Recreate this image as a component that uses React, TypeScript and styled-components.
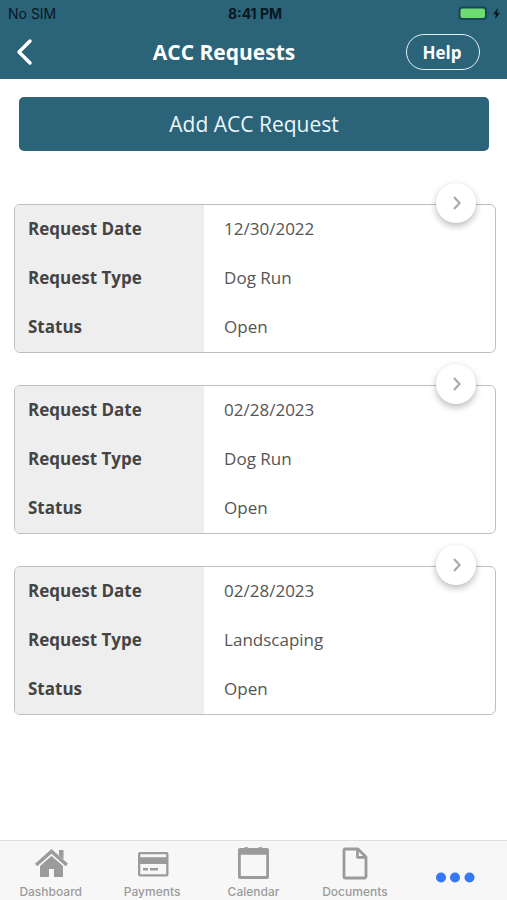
import React from "react";
import styled, { createGlobalStyle } from "styled-components";

const teal = "#2b6379";

const GlobalStyle = createGlobalStyle`
  *, *::before, *::after { box-sizing: border-box; }
  body {
    margin: 0;
    background: #fff;
    font-family: "Open Sans", "Noto Sans", sans-serif;
    color: #444;
  }
  button { font: inherit; cursor: pointer; }
`;

const Screen = styled.div`
  display: flex;
  flex-direction: column;
  min-height: 100vh;
`;

const Header = styled.header`
  background: ${teal};
  color: #fff;
  padding-bottom: 9px;
`;

const StatusBar = styled.div`
  display: grid;
  grid-template-columns: 1fr auto 1fr;
  align-items: center;
  height: 28px;
  padding: 0 5px 0 8px;
  color: #08171e;
  font-family: Inter, sans-serif;
  font-size: 14px;
  line-height: 20px;
`;

const Clock = styled.span`
  font-weight: 700;
`;

const Battery = styled.svg`
  justify-self: end;
  display: block;
`;

const NavBar = styled.nav`
  display: grid;
  grid-template-columns: 74px 1fr 74px;
  align-items: center;
  height: 42px;
  padding: 6px 27px 0 14px;
`;

const BackButton = styled.button`
  justify-self: start;
  display: flex;
  padding: 0;
  border: 0;
  background: none;
  color: #fff;
`;

const Title = styled.h1`
  margin: 0;
  padding-right: 46px;
  font-size: 21px;
  line-height: 28px;
  font-weight: 700;
  text-align: center;
  white-space: nowrap;
`;

const HelpButton = styled.button`
  justify-self: end;
  width: 74px;
  height: 36px;
  padding: 0 2px 0 0;
  border: 1px solid #e3f1f6;
  border-radius: 18px;
  background: none;
  color: #fff;
  font-size: 17px;
  font-weight: 700;
`;

const Content = styled.main`
  flex: 1;
  padding: 18px 11px 32px 14px;
`;

const AddButton = styled.button`
  display: block;
  width: calc(100% - 12px);
  height: 54px;
  margin: 0 0 53px 5px;
  padding: 0;
  border: 0;
  border-radius: 5px;
  background: ${teal};
  color: #eaf7fb;
  font-size: 21px;
`;

const RequestList = styled.ul`
  display: flex;
  flex-direction: column;
  gap: 32px;
  margin: 0;
  padding: 0;
  list-style: none;
`;

const Card = styled.li`
  position: relative;
  border: 1px solid #bfbfbf;
  border-radius: 6px;
`;

const Fields = styled.dl`
  margin: 0;
  border-radius: 5px;
  overflow: hidden;
`;

const Field = styled.div`
  display: grid;
  grid-template-columns: 13fr 20fr;
  font-size: 17px;
  line-height: 47px;
`;

const Label = styled.dt`
  padding: 0 0 2px 13px;
  background: #eee;
  font-weight: 700;
`;

const Value = styled.dd`
  margin: 0;
  padding: 0 0 2px 20px;
  color: #555;
`;

const OpenButton = styled.button`
  position: absolute;
  top: -22px;
  right: 19px;
  display: flex;
  align-items: center;
  justify-content: center;
  width: 40px;
  height: 40px;
  padding: 0;
  border: 0;
  border-radius: 50%;
  background: #fff;
  color: #aaa;
  box-shadow: 0 3px 7px rgba(0, 0, 0, 0.28);
`;

const TabBar = styled.nav`
  position: sticky;
  bottom: 0;
  display: grid;
  grid-template-columns: repeat(5, 1fr);
  height: 60px;
  border-top: 1px solid #dedede;
  background: #f7f7f7;
`;

const Tab = styled.a`
  display: flex;
  flex-direction: column;
  align-items: center;
  padding-top: 5px;
  color: #9b9b9b;
  font-family: Inter, sans-serif;
  font-size: 12px;
  line-height: 16px;
  font-weight: 500;
  text-decoration: none;
`;

const MoreTab = styled(Tab)`
  padding-top: 19px;
  color: #3478f6;
`;

const TabIcon = styled.svg`
  display: block;
  margin-bottom: 4px;
`;

const requests = [
  { id: 1, date: "12/30/2022", type: "Dog Run", status: "Open" },
  { id: 2, date: "02/28/2023", type: "Dog Run", status: "Open" },
  { id: 3, date: "02/28/2023", type: "Landscaping", status: "Open" },
];

const tabs = [
  {
    name: "Dashboard",
    icon: (
      <g fill="currentColor">
        <path d="M17.500 3 34 17.800l-2.200 2.500L17.500 7.800 3.200 20.300 1 17.800Z" />
        <path d="M25 4h4.500v9.500L25 9.500Z" />
        <path d="M17.500 10 29 20v11h-9v-8h-5v8H6V20Z" />
      </g>
    ),
  },
  {
    name: "Payments",
    icon: (
      <g fill="currentColor">
        <path
          fillRule="evenodd"
          d="M5 6h26.500a2 2 0 0 1 2 2v20.500a2 2 0 0 1-2 2H5a2 2 0 0 1-2-2V8A2 2 0 0 1 5 6Zm.300 2.200v3h25.900v-3Zm0 9.800v10.200h25.900V18Z"
        />
        <path d="M8 22h5v2.600H8ZM15 22h8v2.600h-8Z" />
      </g>
    ),
  },
  {
    name: "Calendar",
    icon: (
      <path
        fill="currentColor"
        fillRule="evenodd"
        d="M4 2h4q.5-1 2.300-1t2.300 1h9.400q.5-1 2.300-1t2.300 1H31a2 2 0 0 1 2 2v27a2 2 0 0 1-2 2H4a2 2 0 0 1-2-2V4a2 2 0 0 1 2-2Zm.800 6.800V30h25.400V8.800Z"
      />
    ),
  },
  {
    name: "Documents",
    icon: (
      <g fill="none" stroke="currentColor" strokeWidth="2.800" strokeLinejoin="round">
        <path d="M7.500 3H20l8 8v19.500a1.500 1.500 0 0 1-1.500 1.500h-19A1.500 1.500 0 0 1 6 30.500v-26A1.500 1.500 0 0 1 7.500 3Z" />
        <path d="M19.500 3.500v7.800H28" />
      </g>
    ),
  },
];

export default function App() {
  return (
    <Screen>
      <GlobalStyle />
      <Header>
        <StatusBar>
          <span>No SIM</span>
          <Clock>8:41 PM</Clock>
          <Battery width="44" height="16" viewBox="0 0 44 16" aria-hidden="true">
            <rect x="1.500" y="1.500" width="26.500" height="11.500" rx="3" fill="#6fdc72" stroke="#184759" strokeWidth="2" />
            <path d="M30.500 5.500q1.500 1.800 0 3.500Z" fill="#184759" />
            <path d="M40 2 35 8.200h3l-1 5 5-6.500h-3Z" fill="#08171e" />
          </Battery>
        </StatusBar>
        <NavBar>
          <BackButton type="button" aria-label="Back">
            <svg width="20" height="28" viewBox="0 0 20 28">
              <path d="M16 3 5 14l11 11" fill="none" stroke="currentColor" strokeWidth="3.500" strokeLinecap="round" strokeLinejoin="round" />
            </svg>
          </BackButton>
          <Title>ACC Requests</Title>
          <HelpButton type="button">Help</HelpButton>
        </NavBar>
      </Header>

      <Content>
        <AddButton type="button">Add ACC Request</AddButton>
        <RequestList>
          {requests.map((request) => (
            <Card key={request.id}>
              <Fields>
                <Field>
                  <Label>Request Date</Label>
                  <Value>{request.date}</Value>
                </Field>
                <Field>
                  <Label>Request Type</Label>
                  <Value>{request.type}</Value>
                </Field>
                <Field>
                  <Label>Status</Label>
                  <Value>{request.status}</Value>
                </Field>
              </Fields>
              <OpenButton type="button" aria-label="Open request">
                <svg width="12" height="16" viewBox="0 0 12 16">
                  <path d="M4 2 9.500 8 4 14" fill="none" stroke="currentColor" strokeWidth="2.200" />
                </svg>
              </OpenButton>
            </Card>
          ))}
        </RequestList>
      </Content>

      <TabBar>
        {tabs.map((tab) => (
          <Tab key={tab.name} href="#">
            <TabIcon width="34" height="34" viewBox="0 0 34 34" aria-hidden="true">
              {tab.icon}
            </TabIcon>
            {tab.name}
          </Tab>
        ))}
        <MoreTab href="#" aria-label="More">
          <svg width="40" height="36" viewBox="0 0 40 36" fill="currentColor">
            <circle cx="5" cy="17.500" r="5" />
            <circle cx="19" cy="17.500" r="5" />
            <circle cx="33.500" cy="17.500" r="5" />
          </svg>
        </MoreTab>
      </TabBar>
    </Screen>
  );
}
